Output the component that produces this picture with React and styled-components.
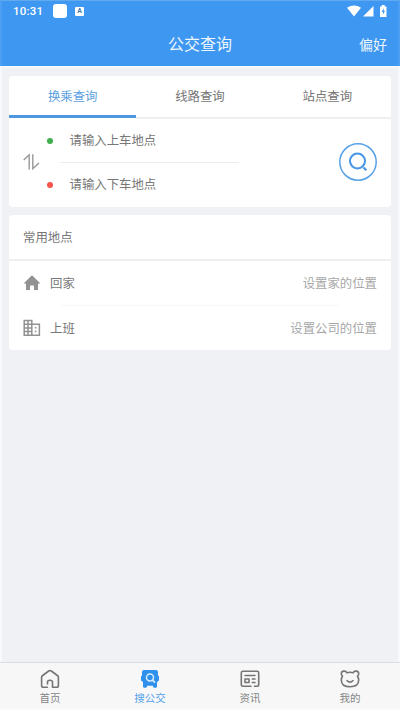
import React from "react";
import styled, { createGlobalStyle } from "styled-components";

const Global = createGlobalStyle`
  * { box-sizing: border-box; }
  body { margin: 0; font-family: Roboto, "Noto Sans CJK SC", sans-serif; }
`;
const Screen = styled.div`
  width: 400px; height: 711px; display: flex; flex-direction: column;
  background: #eff1f5; overflow: hidden;
`;
const Header = styled.header`
  height: 66px; flex: none; background: #3e97f1; color: #edf6fb;
  border-top: 1px solid #62a9ef; border-left: 2px solid #4c9ff2; border-right: 2px solid #4c9ff2;
`;
const StatusBar = styled.div`
  height: 20px; display: flex; align-items: center; padding: 0 10px 0 11px; color: #fff;
  font-size: 11.5px; line-height: 20px; font-weight: 500; letter-spacing: 0.2px;
`;
const Clock = styled.span`width: 30px; margin-right: 10px;`;
const AppBlock = styled.span`width: 14px; height: 14px; border-radius: 3px; background: #fff; margin-right: 8px;`;
const LetterBlock = styled.span`
  width: 9px; height: 9px; border-radius: 1px; background: #fff; color: #3f78ae;
  font: 700 7px/9px Roboto, sans-serif; text-align: center; letter-spacing: 0;
`;
const StatusIcons = styled.div`display: flex; margin-left: auto;`;
const TitleBar = styled.div`
  height: 46px; display: grid; grid-template-columns: 1fr auto 1fr; align-items: center;
  padding: 2px 11px 0;
`;
const Title = styled.h1`margin: 0; grid-column: 2; font-size: 16px; line-height: 24px; font-weight: 400;`;
const Preference = styled.span`justify-self: end; font-size: 14px; line-height: 20px;`;
const Main = styled.main`
  flex: 1; padding: 8px 7px 0; border: 2px solid #f7f8fa; border-bottom: 0;
  display: flex; flex-direction: column; gap: 8px;
`;
const Card = styled.section`background: #fff; border-radius: 4px; color: #777; font-size: 12.4px; overflow: hidden;`;
const Tabs = styled.div`display: flex; height: 43px;`;
const Tab = styled.div`
  flex: 1; text-align: center; line-height: 41px; height: 43px;
  border-bottom: 2px solid #efeff0; color: #747474;
  ${(p) => p.$active && "color: #5c9fdf; border-bottom: 3px solid #4d97e0; height: 42px;"}
`;
const SearchBody = styled.div`height: 88px; display: flex; align-items: flex-start; padding: 0 14px;`;
const SwapIcon = styled.svg`width: 17px; height: 18px; flex: none; margin-top: 34px;`;
const Fields = styled.div`width: 201px; margin-left: 6px;`;
const Field = styled.div`height: 43px; display: flex; align-items: center; line-height: 18px; padding-left: 1px;`;
const Dot = styled.i`width: 6px; height: 6px; border-radius: 50%; background: ${(p) => p.$color}; margin-right: 16.5px;`;
const Separator = styled.div`
  height: 1px; background: ${(p) => p.$color}; margin: 0 ${(p) => p.$right}px 0 ${(p) => p.$left}px;
`;
const SearchButton = styled.button`
  width: 38px; height: 38px; border: 0; border-radius: 50%; padding: 0;
  margin: 24px 0 0 auto; background: #fff; display: grid; place-items: center;
`;
const CardTitle = styled.div`height: 46px; padding-left: 14px; line-height: 45px; border-bottom: 2px solid #efeff0;`;
const Place = styled.div`height: 44px; display: flex; align-items: center; padding: 0 14px;`;
const PlaceIcon = styled.svg`width: 18px; height: 18px; margin-right: 9px;`;
const Action = styled.span`margin-left: auto; color: #a7a7a7;`;
const BottomNav = styled.nav`
  height: 49px; flex: none; display: flex; background: #f7f7f8;
  border-top: 1px solid #dcdde1; border-bottom: 2px solid #fdfdfd;
`;
const NavItem = styled.div`
  flex: 1; display: flex; flex-direction: column; align-items: center; padding-top: 6px;
  color: ${(p) => (p.$active ? "#55a2e8" : "#858585")}; font-size: 10.5px; line-height: 16px;
`;
const NavIcon = styled.svg`width: 20px; height: 20px; margin-bottom: 2px; flex: none;`;

const line = { fill: "none", stroke: "#757575", strokeWidth: 1.6, strokeLinecap: "round", strokeLinejoin: "round" };

export default function App() {
  return (
    <>
      <Global />
      <Screen>
        <Header>
          <StatusBar>
            <Clock>10:31</Clock><AppBlock /><LetterBlock>A</LetterBlock>
            <StatusIcons>
              <svg width="41" height="12" viewBox="0 0 41 12" fill="#fff">
                <path d="M0 2.800Q7-2 14 2.800L7 11.500Z" />
                <path d="M16 11.500 26.500 1V11.500Z" />
                <path d="M33 1.400h1.700V0h3v1.400H39.500V12H33Z" />
                <path d="m36.700 3-2 4h1.300v2.500l2-3.700h-1.300Z" fill="#3e97f1" />
              </svg>
            </StatusIcons>
          </StatusBar>
          <TitleBar><Title>公交查询</Title><Preference>偏好</Preference></TitleBar>
        </Header>
        <Main>
          <Card>
            <Tabs><Tab $active>换乘查询</Tab><Tab>线路查询</Tab><Tab>站点查询</Tab></Tabs>
            <SearchBody>
              <SwapIcon viewBox="0 0 17 18" fill="none" stroke="#979797" strokeWidth="1.4">
                <path d="M.7 7 6.200 1.800V16.500M9.800 1.200V15.700L15.900 10" />
              </SwapIcon>
              <Fields>
                <Field><Dot $color="#3fae4d" />请输入上车地点</Field>
                <Separator $color="#ececec" $left={14} $right={8} />
                <Field><Dot $color="#f5534b" />请输入下车地点</Field>
              </Fields>
              <SearchButton aria-label="搜索">
                <svg width="38" height="38" viewBox="0 0 38 38" fill="none" stroke="#4695e6">
                  <circle cx="19" cy="19" r="18.200" strokeWidth="1.500" stroke="#58a2e8" />
                  <circle cx="18.500" cy="18" r="7.500" strokeWidth="2" />
                  <path d="m24.500 24.500 2.800 2.800" strokeWidth="2.200" />
                </svg>
              </SearchButton>
            </SearchBody>
          </Card>
          <Card>
            <CardTitle>常用地点</CardTitle>
            <Place>
              <PlaceIcon viewBox="0 0 18 18" fill="#929292">
                <path d="M1 9 9 1.300 17 9l-1 1-1-.7V16h-4v-4.500H7V16H3V9.300L2 10Z" />
              </PlaceIcon>
              回家<Action>设置家的位置</Action>
            </Place>
            <Separator $color="#f7f7f7" $left={52} $right={52} />
            <Place>
              <PlaceIcon viewBox="0 0 18 18" fill="none" stroke="#929292" strokeWidth="1.500">
                <path d="M1.200 1.500h7.600v14.800H1.200ZM5 1.500v14.800M1.200 5.200h7.600M1.200 8.900h7.600M1.200 12.600h7.600M8.800 5.200h7.600v11.100H8.800M11.800 8.800h1.600M11.800 12.600h1.600" />
              </PlaceIcon>
              上班<Action>设置公司的位置</Action>
            </Place>
          </Card>
        </Main>
        <BottomNav>
          <NavItem>
            <NavIcon viewBox="0 0 20 20" {...line}>
              <path d="M7.400 18.300H3.200Q1.600 18.300 1.600 16.500V8.200Q1.600 7.200 2.600 6.500L8.700 2Q10 1 11.300 2L17.400 6.500Q18.400 7.200 18.400 8.200V16.500Q18.400 18.300 16.800 18.300H12.500V13Q12.500 11.200 10 11.200T7.500 13V15" />
            </NavIcon>首页
          </NavItem>
          <NavItem $active>
            <NavIcon viewBox="0 0 20 20">
              <path fill="#2f91ec" d="M4 1h12q1.800 0 2 2v3.400q1 .2 1 1.200V11q0 1-1 1.300l-1 .8v4.400q0 1.200-1.200 1.200h-1.500q-.9 0-1.100-.8l-.4-1.200H7.200l-.4 1.200q-.2.8-1.100.8H4.200Q3 18.700 3 17.500V13.100L2 12.300Q1 12 1 11V7.600Q1 6.600 2 6.400V3Q2.200 1 4 1Z" />
              <circle cx="10" cy="8.500" r="3.500" fill="none" stroke="#d8edff" strokeWidth="1.500" />
              <path d="m12.500 11.100 2 2" stroke="#d8edff" strokeWidth="1.700" strokeLinecap="round" />
            </NavIcon>搜公交
          </NavItem>
          <NavItem>
            <NavIcon viewBox="0 0 20 20" {...line}>
              <path d="M11 17.300H3Q1.300 17.300 1.300 15.600V3.800Q1.300 2.200 3 2.200H17Q18.700 2.200 18.700 3.800V15.600Q18.700 17.300 17 17.300H14.500M5 6.500H15M12.300 10H15M12.300 13.500H15M5 10h4v3.500H5Z" />
            </NavIcon>资讯
          </NavItem>
          <NavItem>
            <NavIcon viewBox="0 0 20 20" {...line}>
              <path d="M6.800 3.700Q10 2.700 13.200 3.700C14 1.500 18.700 1.300 18.700 4.800Q18.700 6.400 17.500 7.200Q18.700 9 18.700 11C18.700 16 15.500 17.700 10 17.700S1.300 16 1.300 11Q1.300 9 2.500 7.200Q1.300 6.400 1.300 4.800C1.300 1.300 6 1.500 6.800 3.700ZM7 11.500Q10 14.700 13 11.500" />
            </NavIcon>我的
          </NavItem>
        </BottomNav>
      </Screen>
    </>
  );
}
